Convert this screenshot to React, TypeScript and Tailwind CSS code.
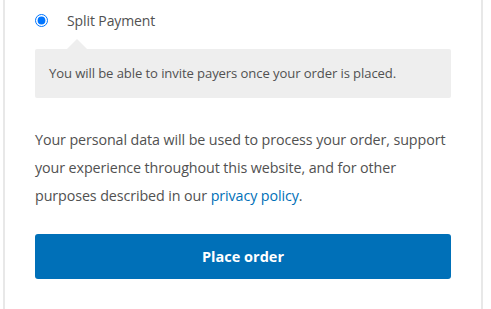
import React, { useState } from 'react';

function App() {
  const [method, setMethod] = useState('split');

  return (
    <div className="min-h-screen bg-white" style={{ fontFamily: '"Open Sans", "Noto Sans", sans-serif' }}>
      <div className="ml-[3px] w-[480px] min-h-screen border-x-2 border-[#e8e8e8] px-[30px]">
        {/* payment method */}
        <label className="flex h-[28px] items-center pt-[6px] box-content cursor-pointer">
          <input
            type="radio"
            name="payment"
            checked={method === 'split'}
            onChange={() => setMethod('split')}
            className="m-0 h-[13px] w-[13px] accent-[#0075ff]"
          />
          <span className="ml-[19px] text-[14px] tracking-[-0.1px] text-[#515151]">Split Payment</span>
        </label>

        <div className="relative mt-[15px] flex h-[49px] items-center rounded-[2px] bg-[#eeeeee] px-[14px]">
          <svg className="absolute -top-[10px] left-[32px]" width="20" height="10" viewBox="0 0 20 10">
            <path d="M0 10 L10 0 L20 10 Z" fill="#eeeeee" />
          </svg>
          <p className="text-[13.1px] tracking-[-0.1px] text-[#515151]">
            You will be able to invite payers once your order is placed.
          </p>
        </div>

        <p className="mt-[28px] text-[14.3px] leading-[28px] tracking-[-0.1px] text-[#515151]">
          Your personal data will be used to process your order, support
          <br />
          your experience throughout this website, and for other
          <br />
          purposes described in our{' '}
          <a href="#" className="text-[#0070b8]">
            privacy policy
          </a>
          .
        </p>

        <button className="mt-[24px] flex h-[45px] w-full items-center justify-center rounded-[3px] bg-[#0070b8] text-[14.5px] font-bold text-white">
          Place order
        </button>
      </div>
    </div>
  );
}

export default App;
